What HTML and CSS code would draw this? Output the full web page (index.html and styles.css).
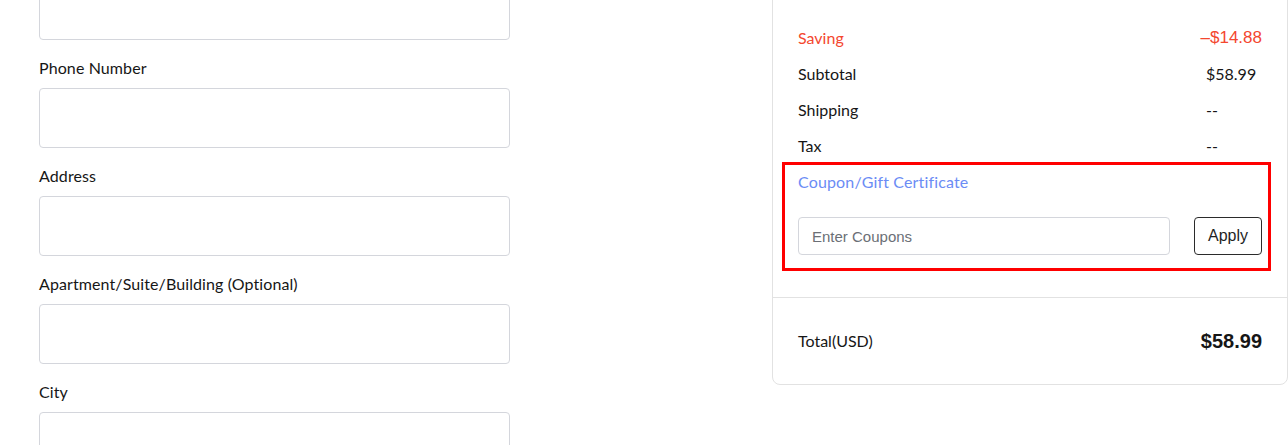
FILE: index.html
```html
<!DOCTYPE html>
<html lang="en">
<head>
  <meta charset="UTF-8">
  <meta name="viewport" content="width=device-width, initial-scale=1.0">
  <title>Checkout</title>
  <link rel="stylesheet" href="styles.css">
</head>
<body>
  <div class="checkout">
    <form class="address-form">
      <div class="field">
        <input class="field-input" type="text">
      </div>
      <div class="field">
        <label class="field-label">Phone Number</label>
        <input class="field-input" type="tel">
      </div>
      <div class="field">
        <label class="field-label">Address</label>
        <input class="field-input" type="text">
      </div>
      <div class="field">
        <label class="field-label">Apartment/Suite/Building (Optional)</label>
        <input class="field-input" type="text">
      </div>
      <div class="field">
        <label class="field-label">City</label>
        <input class="field-input" type="text">
      </div>
    </form>

    <aside class="summary">
      <div class="summary-body">
        <div class="summary-row saving">
          <span>Saving</span>
          <span class="value amount">–$14.88</span>
        </div>
        <div class="summary-row">
          <span>Subtotal</span>
          <span class="value">$58.99</span>
        </div>
        <div class="summary-row">
          <span>Shipping</span>
          <span class="value">--</span>
        </div>
        <div class="summary-row">
          <span>Tax</span>
          <span class="value">--</span>
        </div>

        <div class="coupon">
          <div class="coupon-title">Coupon/Gift Certificate</div>
          <div class="coupon-form">
            <input class="coupon-input" type="text" placeholder="Enter Coupons">
            <button class="coupon-btn" type="button">Apply</button>
          </div>
        </div>
      </div>

      <div class="summary-total">
        <span>Total(USD)</span>
        <span class="total-amount">$58.99</span>
      </div>
    </aside>
  </div>
</body>
</html>
```

FILE: styles.css
```css
html, body {
  overflow: hidden;
}

body {
  margin: 0;
  font-family: 'Lato', 'Liberation Sans', sans-serif;
  font-size: 16px;
  color: #161616;
  background: #fff;
}

.checkout {
  display: flex;
  align-items: flex-start;
  margin-top: -20px;
  padding-left: 39px;
}

/* left column: address fields */
.address-form {
  width: 471px;
  flex-shrink: 0;
}

.field-label {
  display: block;
  margin: 16px 0 8px;
  line-height: 24px;
  letter-spacing: 0.1px;
}

.field-input {
  display: block;
  box-sizing: border-box;
  width: 100%;
  height: 60px;
  border: 1px solid #d4d6dc;
  border-radius: 4px;
  background: #fff;
}

/* right column: order summary card */
.summary {
  box-sizing: border-box;
  width: 516px;
  margin-left: 262px;
  flex-shrink: 0;
  border: 1px solid #e2e2e2;
  border-radius: 8px;
}

.summary-body {
  padding: 46px 25px 35px;
}

.summary-row {
  display: flex;
  justify-content: space-between;
  line-height: 22px;
  margin-bottom: 14px;
}

.summary-row .value {
  min-width: 56px;
}

.summary-row.saving {
  color: #f4472f;
}

.amount {
  font-family: 'Liberation Sans', sans-serif;
  font-size: 17px;
}

.coupon {
  margin-left: -7px;
  padding: 0 0 7px 7px;
  outline: 3px solid #f00;
  outline-offset: 6px;
}

.coupon-title {
  line-height: 22px;
  color: #6b8cf5;
  letter-spacing: 0.15px;
}

.coupon-form {
  display: flex;
  gap: 24px;
  margin-top: 24px;
}

.coupon-input {
  flex: 1;
  box-sizing: border-box;
  height: 38px;
  padding: 0 13px;
  border: 1px solid #d4d6dc;
  border-radius: 4px;
  font-family: 'Liberation Sans', sans-serif;
  font-size: 15px;
}

.coupon-input::placeholder {
  color: #6b6f76;
}

.coupon-btn {
  box-sizing: border-box;
  width: 68px;
  height: 38px;
  padding: 0;
  border: 1px solid #2b2b2b;
  border-radius: 4px;
  background: #fff;
  color: #1f1f1f;
  font-family: 'Liberation Sans', sans-serif;
  font-size: 16px;
  cursor: pointer;
}

.summary-total {
  display: flex;
  justify-content: space-between;
  align-items: center;
  padding: 31px 25px 31px;
  border-top: 1px solid #e2e2e2;
  line-height: 24px;
}

.total-amount {
  font-family: 'Liberation Sans', sans-serif;
  font-weight: bold;
  font-size: 20px;
}
```
